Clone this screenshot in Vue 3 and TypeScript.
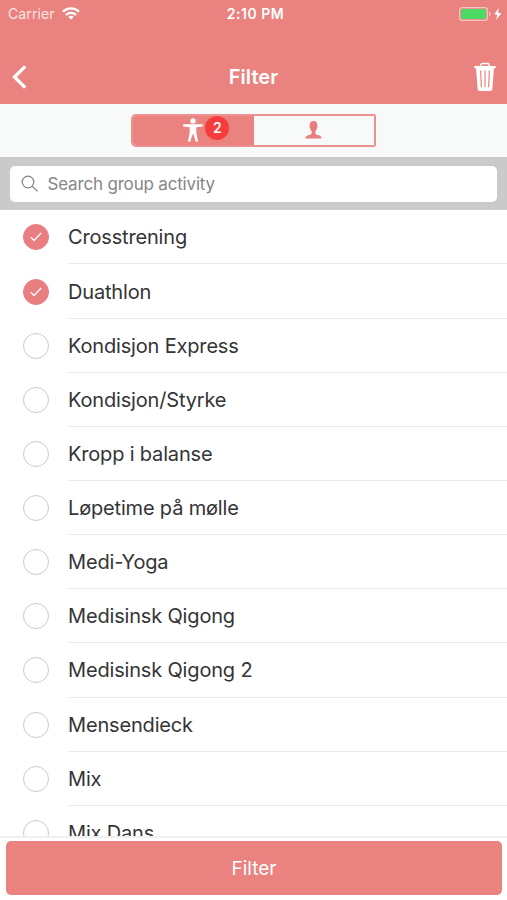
<script setup lang="ts">
import { ref, computed } from 'vue'

interface Activity {
  name: string
  selected: boolean
}

const activities = ref<Activity[]>([
  { name: 'Crosstrening', selected: true },
  { name: 'Duathlon', selected: true },
  { name: 'Kondisjon Express', selected: false },
  { name: 'Kondisjon/Styrke', selected: false },
  { name: 'Kropp i balanse', selected: false },
  { name: 'Løpetime på mølle', selected: false },
  { name: 'Medi-Yoga', selected: false },
  { name: 'Medisinsk Qigong', selected: false },
  { name: 'Medisinsk Qigong 2', selected: false },
  { name: 'Mensendieck', selected: false },
  { name: 'Mix', selected: false },
  { name: 'Mix Dans', selected: false },
])

const search = ref('')
const selectedCount = computed(() => activities.value.filter((a) => a.selected).length)
const visible = computed(() =>
  activities.value.filter((a) => a.name.toLowerCase().includes(search.value.toLowerCase())),
)
</script>

<template>
  <main class="screen">
    <header class="header">
      <div class="status">
        <div class="carrier">
          <span>Carrier</span>
          <svg width="18" height="13" viewBox="0 0 18 13" fill="none" stroke="#fff" stroke-width="2.4">
            <path d="M1 4.7C5.6.3 12.4.3 17 4.7M4 8c2.8-2.8 7.2-2.8 10 0" />
            <path d="M9 12.5 6.3 9.9c1.5-1.4 3.9-1.4 5.4 0z" fill="#fff" stroke="none" />
          </svg>
        </div>
        <span class="time">2:10 PM</span>
        <div class="power">
          <svg width="44" height="14" viewBox="0 0 44 14">
            <rect x=".6" y=".6" width="27.8" height="12.8" rx="2.6" fill="none" stroke="#f6c6c3" stroke-width="1.2" />
            <rect x="2" y="2" width="25" height="10" rx="1" fill="#4cd964" />
            <path d="M30 4.7c2 .7 2 3.9 0 4.6z" fill="#f6c6c3" />
            <path d="M39.8 1 35.2 7.5h3.1L37.2 13l5.2-7.1h-3.3z" fill="#fff" />
          </svg>
        </div>
      </div>
      <div class="navbar">
        <button class="back" aria-label="Back">
          <svg width="15" height="24" viewBox="0 0 15 24" fill="none" stroke="#fff" stroke-width="3.4">
            <path d="M13.2 1.4 2.5 12l10.7 10.6" />
          </svg>
        </button>
        <h1>Filter</h1>
        <button class="trash" aria-label="Clear filters">
          <svg width="22" height="30" viewBox="0 0 22 30">
            <path d="M6.8 4.5V3.2c0-1 .7-1.7 1.7-1.7h5c1 0 1.7.7 1.7 1.7v1.3" fill="none" stroke="#fff" stroke-width="1.5" />
            <path d="M.3 4h21.4v2.2H.3z" fill="#fff" />
            <path d="M2 6h18l-1.7 21.3c-.1 1.1-.8 1.7-1.8 1.7h-11c-1 0-1.7-.6-1.8-1.7z" fill="#fff" />
            <path d="m6.6 8.6.8 16.6M11 8.6v16.6m4.4-16.6-.8 16.6" fill="none" stroke="#ea827f" stroke-width="1.2" />
          </svg>
        </button>
      </div>
    </header>

    <nav class="tabs">
      <div class="segmented">
        <button class="segment active" aria-label="Activities">
          <svg width="20" height="24" viewBox="0 0 20 24" fill="#fff">
            <circle cx="10" cy="2.9" r="2.7" />
            <path d="M.8 6.3h18.4c1 0 1 2.2 0 2.3l-5.9.6v5.2l1.6 8.4c.1 1-1.8 1.4-2.2.4L10.3 16h-.6l-2.4 7.2c-.4 1-2.3.6-2.2-.4l1.6-8.4V9.2L.8 8.6c-1-.1-1-2.3 0-2.3z" />
          </svg>
          <span class="badge">{{ selectedCount }}</span>
        </button>
        <button class="segment person" aria-label="Instructors">
          <svg width="17" height="18" viewBox="0 0 18 18" fill="#ea7d80" preserveAspectRatio="none">
            <path d="M9 0c3 0 4.2 2 3.9 4.5.8.2.4 2.2-.4 2.9-.3 1.4-.8 2.2-1.5 2.9v2.2c.4 1 2.4 1.4 4.2 2.1 1.5.6 2.1 1.3 2.3 2.9H.5c.2-1.6.8-2.3 2.3-2.9 1.8-.7 3.8-1.1 4.2-2.1v-2.2c-.7-.7-1.2-1.5-1.5-2.9-.8-.7-1.2-2.7-.4-2.9C4.8 2 6 0 9 0z" />
          </svg>
        </button>
      </div>
    </nav>

    <section class="search-bar">
      <label class="search">
        <svg width="18" height="18" viewBox="0 0 18 18" fill="none" stroke="#85858a" stroke-width="1.3">
          <circle cx="7" cy="7" r="5.8" />
          <path d="m11.2 11.2 5.4 5.2" />
        </svg>
        <input v-model="search" type="text" placeholder="Search group activity" />
      </label>
    </section>

    <ul class="list">
      <li v-for="item in visible" :key="item.name" class="row" @click="item.selected = !item.selected">
        <span class="check" :class="{ on: item.selected }">
          <svg v-if="item.selected" width="12" height="10" viewBox="0 0 12 10" fill="none" stroke="#fff" stroke-width="1.3">
            <path d="m.8 5.3 3.3 3.2 7-7.5" />
          </svg>
        </span>
        <span class="label">{{ item.name }}</span>
      </li>
    </ul>

    <footer class="footer">
      <button class="submit">Filter</button>
    </footer>
  </main>
</template>

<style>
body {
  margin: 0;
  background: #fff;
}
</style>

<style scoped>
.screen {
  width: 507px;
  height: 900px;
  display: flex;
  flex-direction: column;
  overflow: hidden;
  background: #fff;
  font-family: Inter, "Liberation Sans", sans-serif;
  color: #343436;
}
button {
  border: 0;
  padding: 0;
  background: none;
  font-family: inherit;
  color: inherit;
}
svg {
  display: block;
  flex: none;
}
.header {
  flex: none;
  height: 103.5px;
  background: #ea827f;
  color: #fff;
}
.status {
  height: 27px;
  display: grid;
  grid-template-columns: 1fr auto 1fr;
  align-items: center;
  padding: 0 4px 0 8px;
  font-size: 14px;
}
.carrier {
  display: flex;
  align-items: center;
  gap: 7px;
  color: #fbe6e4;
  letter-spacing: 0.12px;
}
.time {
  font-size: 14px;
  font-weight: 600;
  letter-spacing: 0.5px;
}
.power {
  display: flex;
  justify-content: flex-end;
}
.navbar {
  height: 76px;
  display: grid;
  grid-template-columns: 1fr auto 1fr;
  align-items: center;
  padding: 0 11px;
}
.back {
  justify-self: start;
  margin: 23px 0 0 1px;
}
.trash {
  justify-self: end;
  margin-top: 24px;
}
h1 {
  margin: 23px 0 0;
  font-size: 20px;
  line-height: 26px;
  font-weight: 600;
  letter-spacing: 0.05px;
}
.tabs {
  flex: none;
  height: 53px;
  display: flex;
  justify-content: center;
  align-items: center;
  background: #f8f9f9;
}
.segmented {
  width: 245px;
  height: 33px;
  box-sizing: border-box;
  display: grid;
  grid-template-columns: 1fr 1fr;
  border: 2px solid #ec9190;
  border-radius: 5px 2px 2px 5px;
  overflow: hidden;
  background: #f8f9f9;
}
.segment {
  min-width: 0;
  box-sizing: border-box;
  display: flex;
  align-items: center;
  justify-content: center;
}
.active {
  gap: 2px;
  padding-left: 26px;
  background: #ea827f;
}
.badge {
  width: 24px;
  height: 24px;
  margin-top: -4px;
  border-radius: 50%;
  background: #f63c3c;
  color: #fff;
  font-size: 14px;
  font-weight: 600;
  line-height: 24px;
}
.search-bar {
  flex: none;
  height: 53.5px;
  box-sizing: border-box;
  padding: 9px 10px 8px;
  background: #cacaca;
}
.search {
  height: 36.5px;
  display: flex;
  align-items: center;
  gap: 8.5px;
  padding: 0 11px;
  border-radius: 5px;
  background: #fff;
}
input {
  flex: 1;
  border: 0;
  outline: 0;
  padding: 0;
  background: none;
  font: 17px Inter, "Liberation Sans", sans-serif;
  letter-spacing: -0.18px;
  color: #343436;
}
input::placeholder {
  color: #85858a;
  opacity: 1;
}
.list {
  flex: 1;
  min-height: 0;
  overflow: hidden;
  margin: 0;
  padding: 0.3px 0 0;
  list-style: none;
}
.row {
  height: 54.15px;
  display: flex;
  align-items: center;
  padding-left: 23px;
  gap: 19px;
}
.check {
  flex: none;
  width: 26px;
  height: 26px;
  box-sizing: border-box;
  display: flex;
  align-items: center;
  justify-content: center;
  border: 1.5px solid #cbcbcd;
  border-radius: 50%;
}
.check.on {
  border-color: #ea7d80;
  background: #ea7d80;
}
.label {
  flex: 1;
  height: 100%;
  box-sizing: border-box;
  display: flex;
  align-items: center;
  padding-top: 1px;
  border-bottom: 1.5px solid #e9e9eb;
  font-size: 20px;
  letter-spacing: -0.17px;
}
.footer {
  flex: none;
  height: 64px;
  box-sizing: border-box;
  padding: 3px 5px 5px 6px;
  border-top: 2px solid #f0f0f0;
  background: #fff;
}
.submit {
  display: block;
  width: 100%;
  height: 54px;
  border-radius: 5px;
  background: #ea827f;
  color: #fff;
  font-size: 19px;
}
</style>
